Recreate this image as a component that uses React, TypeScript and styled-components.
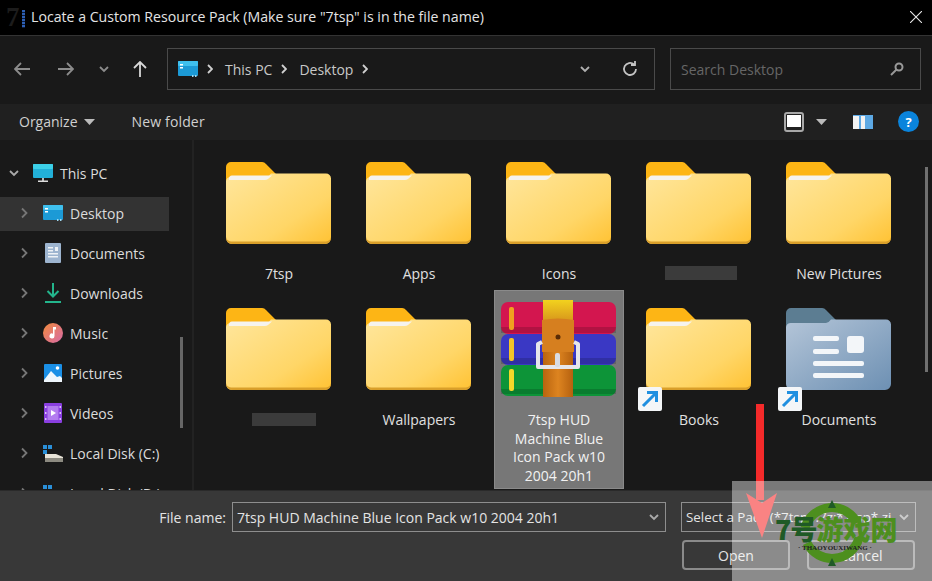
import React from "react";
import styled, { createGlobalStyle } from "styled-components";

const Global = createGlobalStyle`
  html, body { margin: 0; padding: 0; background: #191919; }
  * { box-sizing: border-box; }
`;

const Window = styled.div`
  position: relative;
  width: 932px;
  height: 581px;
  overflow: hidden;
  display: flex;
  flex-direction: column;
  background: #191919;
  color: #e6e6e6;
  font-family: "Open Sans", "Liberation Sans", sans-serif;
  font-size: 14px;
`;

const TitleBar = styled.div`
  height: 36px;
  flex: none;
  background: #000;
  border-bottom: 1px solid #333;
  display: flex;
  align-items: center;
  padding: 0 10px 2px 6px;
  gap: 5px;
`;
const AppLogo = styled.div`
  position: relative;
  width: 20px;
  height: 24px;
  flex: none;
  font-family: "Liberation Serif", serif;
  font-weight: 700;
  font-size: 27px;
  line-height: 24px;
  color: #1c1c1c;
`;
const LogoBar = styled.span`
  position: absolute;
  right: 1px;
  top: 5px;
  width: 3px;
  height: 18px;
  background: repeating-linear-gradient(#2d5fb4 0 2px, #0d1c3a 2px 3px);
`;
const TitleText = styled.div`
  flex: 1;
  font-size: 14.15px;
  color: #e4e4e4;
  white-space: nowrap;
`;

const NavBar = styled.div`
  height: 68px;
  flex: none;
  background: #191919;
  display: flex;
  align-items: flex-start;
  padding: 12px 11px 0 12px;
`;
const NavButtons = styled.div`
  width: 155px;
  flex: none;
  display: flex;
  align-items: center;
  height: 41px;
  padding-left: 2px;
`;
const NavIcon = styled.div<{ $gap?: number }>`
  width: 16px;
  margin-left: ${(p) => p.$gap ?? 0}px;
  display: flex;
  justify-content: center;
  flex: none;
`;
const AddressBox = styled.div`
  width: 488px;
  height: 42px;
  flex: none;
  border: 1px solid #4a4a4a;
  display: flex;
  align-items: center;
  padding: 0 16px 0 10px;
  color: #c8c8c8;
`;
const CrumbSep = styled.svg`
  width: 6px;
  height: 10px;
  margin: 0 12px 0 9px;
  flex: none;
`;
const Spacer = styled.div`
  flex: 1;
`;
const DropSlot = styled.div`
  display: flex;
  margin-right: 31px;
`;
const SearchBox = styled.div`
  width: 251px;
  height: 42px;
  margin-left: 15px;
  flex: none;
  border: 1px solid #4a4a4a;
  display: flex;
  align-items: center;
  justify-content: space-between;
  padding: 0 16px 0 10px;
  color: #666;
`;

const CommandBar = styled.div`
  height: 36px;
  flex: none;
  background: #202020;
  display: flex;
  align-items: center;
  padding: 0 13px 1px 19px;
  color: #d0d0d0;
`;
const CommandLabel = styled.span`
  margin-right: 6px;
`;
const CommandGroup = styled.div`
  display: flex;
  align-items: center;
`;
const NewFolder = styled.span`
  margin-left: 37px;
  letter-spacing: 0.15px;
`;
const ViewTools = styled.div`
  margin-left: auto;
  display: flex;
  align-items: center;
  gap: 12px;
`;
const PaneIcon = styled.svg`
  width: 20px;
  height: 14px;
  margin-left: 14px;
`;
const Help = styled.div`
  width: 21px;
  height: 21px;
  border-radius: 50%;
  margin-left: 25px;
  background: #0a84dc;
  color: #fff;
  font-size: 13px;
  font-weight: 700;
  display: flex;
  align-items: center;
  justify-content: center;
`;

const Body = styled.div`
  flex: 1;
  min-height: 0;
  display: flex;
  overflow: hidden;
`;
const Sidebar = styled.div`
  position: relative;
  width: 194px;
  flex: none;
  border-right: 2px solid #222;
  padding-top: 17px;
  overflow: hidden;
  display: flex;
  flex-direction: column;
  gap: 6px;
`;
const TreeRow = styled.div<{ $active?: boolean; $root?: boolean }>`
  height: 34px;
  width: 169px;
  flex: none;
  display: flex;
  align-items: center;
  padding-left: ${(p) => (p.$root ? 7 : 17)}px;
  padding-bottom: 2px;
  background: ${(p) => (p.$active ? "#333" : "transparent")};
  color: #dcdcdc;
  white-space: nowrap;
`;
const TreeChevron = styled.div`
  width: 14px;
  flex: none;
  display: flex;
  justify-content: center;
`;
const TreeIcon = styled.div`
  width: 26px;
  margin-left: 9px;
  margin-right: 4px;
  flex: none;
  display: flex;
  justify-content: center;
`;
const SideThumb = styled.div`
  position: absolute;
  left: 180px;
  top: 197px;
  width: 3px;
  height: 91px;
  background: #666;
`;

const Files = styled.div`
  position: relative;
  flex: 1;
  padding: 4px 0 0 20px;
  display: grid;
  grid-template-columns: repeat(5, 130px);
  grid-auto-rows: min-content;
  column-gap: 10px;
  row-gap: 10px;
  align-content: start;
  overflow: hidden;
`;
const FileThumb = styled.div`
  position: absolute;
  right: 4px;
  top: 27px;
  width: 3px;
  height: 205px;
  background: #707070;
`;
const Tile = styled.div<{ $selected?: boolean }>`
  position: relative;
  width: 130px;
  height: ${(p) => (p.$selected ? 199 : 136)}px;
  padding-top: 10px;
  display: flex;
  flex-direction: column;
  align-items: center;
  background: ${(p) => (p.$selected ? "#777" : "transparent")};
  box-shadow: ${(p) => (p.$selected ? "inset 0 0 0 1px #8a8a8a" : "none")};
  color: ${(p) => (p.$selected ? "#f2f2f2" : "#e0e0e0")};
`;
const IconSlot = styled.div`
  height: 97px;
  padding-right: 1px;
  flex: none;
  display: flex;
  align-items: center;
  justify-content: center;
`;
const TileLabel = styled.div`
  margin-top: 14px;
  width: 110px;
  text-align: center;
  line-height: 18.7px;
`;
const Redacted = styled.div<{ $w: number; $x: number; $top: number; $h: number }>`
  margin-top: ${(p) => p.$top}px;
  margin-left: ${(p) => p.$x}px;
  width: ${(p) => p.$w}px;
  height: ${(p) => p.$h}px;
  background: #3b3b3b;
`;
const ShortcutBadge = styled.div`
  position: absolute;
  left: 4px;
  top: 97px;
  width: 24px;
  height: 24px;
  background: #f4f6f8;
  border-radius: 2px;
  display: flex;
  align-items: center;
  justify-content: center;
`;

const Footer = styled.div`
  height: 91px;
  flex: none;
  background: #383838;
  border-top: 1px solid #2a2a2a;
  padding: 11px 0 0 0;
  display: flex;
  flex-direction: column;
  gap: 8px;
  color: #e4e4e4;
`;
const FooterRow = styled.div<{ $right: number }>`
  display: flex;
  justify-content: flex-end;
  align-items: center;
  padding-right: ${(p) => p.$right}px;
`;
const FieldLabel = styled.label`
  margin-right: 6px;
`;
const Field = styled.div<{ $w: number }>`
  width: ${(p) => p.$w}px;
  height: 30px;
  border: 1px solid #8e8e8e;
  display: flex;
  align-items: center;
  justify-content: space-between;
  padding: 0 5px 0 4px;
  white-space: nowrap;
  overflow: hidden;
`;
const FieldText = styled.span<{ $size?: number }>`
  overflow: hidden;
  font-size: ${(p) => p.$size ?? 14}px;
`;
const FilterGap = styled.div`
  width: 15px;
  flex: none;
`;
const DialogButton = styled.div<{ $gap?: number }>`
  width: 108px;
  height: 30px;
  margin-left: ${(p) => p.$gap ?? 0}px;
  border: 2px solid #8a8a8a;
  border-radius: 4px;
  display: flex;
  align-items: center;
  justify-content: center;
  color: #e4e4e4;
`;

const Wash = styled.div`
  position: absolute;
  left: 732px;
  top: 481px;
  width: 200px;
  height: 100px;
  background: rgba(255, 255, 255, 0.42);
`;
const ArrowLayer = styled.svg`
  position: absolute;
  left: 740px;
  top: 400px;
  width: 45px;
  height: 145px;
`;
const RingLayer = styled.svg`
  position: absolute;
  left: 65px;
  top: 17px;
  width: 70px;
  height: 70px;
`;
const BrandText = styled.div`
  position: absolute;
  left: 43px;
  top: 33px;
  display: flex;
  font-family: "Noto Sans CJK SC", sans-serif;
  font-weight: 900;
  font-size: 27px;
  line-height: 30px;
  white-space: nowrap;
`;
const BrandDark = styled.span`
  color: #1f5a26;
  letter-spacing: -1px;
`;
const BrandLight = styled.span`
  color: #4d8f1e;
`;
const BrandSub = styled.div`
  position: absolute;
  left: 66px;
  top: 63px;
  font-family: "Liberation Serif", serif;
  font-weight: 700;
  font-size: 7px;
  line-height: 8px;
  color: #222;
  white-space: nowrap;
`;

const Chevron = ({ dir, color = "#aaa", size = 12 }: { dir: "down" | "right"; color?: string; size?: number }) => (
  <svg width={size} height={size} viewBox="0 0 12 12" fill="none" stroke={color} strokeWidth="1.8">
    {dir === "down" ? <path d="M2 4l4 4 4-4" /> : <path d="M4 1.5l4.5 4.5L4 10.5" />}
  </svg>
);
const Caret = ({ color = "#bbb" }: { color?: string }) => (
  <svg width="11" height="6" viewBox="0 0 11 6"><path d="M0 0h11L5.5 6z" fill={color} /></svg>
);
const Sep = () => (
  <CrumbSep viewBox="0 0 6 10" fill="none" stroke="#d0d0d0" strokeWidth="1.800">
    <path d="M1 1l4 4-4 4" />
  </CrumbSep>
);

const Folder = () => (
  <svg width="105" height="82" viewBox="0 0 105 82">
    <defs>
      <linearGradient id="fbody" x1="0" y1="0" x2="1" y2="1">
        <stop offset="0" stopColor="#ffe69c" />
        <stop offset="0.65" stopColor="#ffd667" />
        <stop offset="1" stopColor="#ffc233" />
      </linearGradient>
    </defs>
    <path d="M0 14V5a5 5 0 0 1 5-5h30a6 6 0 0 1 5 2l10 10v14H0z" fill="#fdb515" />
    <path d="M0 19a5 5 0 0 1 5-4h35a8 8 0 0 0 5-3.500h55a5 5 0 0 1 5 5V76a6 6 0 0 1-6 6H6a6 6 0 0 1-6-6z" fill="url(#fbody)" />
    <path d="M3 17a3 3 0 0 1 3-3.500h40l-4 3.500a6 6 0 0 1-3 1H3z" fill="#f5f3ee" />
    <path d="M0 76a6 6 0 0 0 6 6h93a6 6 0 0 0 6-6v-1.500a5 5 0 0 1-5 5H5a5 5 0 0 1-5-5z" fill="#d99f2a" />
  </svg>
);

const DocFolder = () => (
  <svg width="105" height="82" viewBox="0 0 105 82">
    <defs>
      <linearGradient id="dbody" x1="0" y1="0" x2="1" y2="1">
        <stop offset="0" stopColor="#b4c5d8" />
        <stop offset="1" stopColor="#6d90b3" />
      </linearGradient>
    </defs>
    <path d="M0 20V5a5 5 0 0 1 5-5h30a6 6 0 0 1 5 2l10 10v10H0z" fill="#5c7d92" />
    <path d="M0 19a5 5 0 0 1 5-4h35a8 8 0 0 0 5-3.500h55a5 5 0 0 1 5 5V76a6 6 0 0 1-6 6H6a6 6 0 0 1-6-6z" fill="url(#dbody)" />
    <g fill="#f3f6f9">
      <rect x="27" y="28" width="26" height="5" rx="2" />
      <rect x="27" y="41" width="26" height="5" rx="2" />
      <rect x="61" y="28" width="17" height="17" rx="3" />
      <rect x="27" y="53" width="51" height="5" rx="2" />
      <rect x="27" y="65" width="51" height="5" rx="2" />
    </g>
  </svg>
);

const WinRar = () => (
  <svg width="116" height="97" viewBox="0 0 116 97">
    <defs>
      <linearGradient id="rbelt" x1="0" y1="0" x2="1" y2="0">
        <stop offset="0" stopColor="#b9640f" />
        <stop offset="0.5" stopColor="#dd8420" />
        <stop offset="1" stopColor="#b5610f" />
      </linearGradient>
      <linearGradient id="rtop" x1="0" y1="0" x2="0" y2="1">
        <stop offset="0" stopColor="#f2d21e" />
        <stop offset="1" stopColor="#d99a1c" />
      </linearGradient>
    </defs>
    <rect x="0" y="2" width="115" height="32" rx="7" fill="#d3164f" />
    <rect x="0" y="34" width="115" height="31" rx="7" fill="#3a38c4" />
    <rect x="0" y="65" width="115" height="31" rx="7" fill="#0d9438" />
    <rect x="0" y="27" width="115" height="6" fill="#000" opacity="0.16" />
    <rect x="0" y="58" width="115" height="6" fill="#000" opacity="0.16" />
    <rect x="0" y="89" width="115" height="5" fill="#000" opacity="0.16" />
    <rect x="8" y="7" width="5" height="23" rx="2" fill="#f0a020" />
    <rect x="8" y="38" width="5" height="23" rx="2" fill="#f2c42a" />
    <rect x="8" y="69" width="5" height="22" rx="2" fill="#f2d82a" />
    <rect x="42" y="0" width="30" height="97" fill="url(#rbelt)" />
    <rect x="42" y="0" width="30" height="20" fill="url(#rtop)" />
    <path d="M41 20q16-3 32 0v6q-16-2-32 0zM41 26q16-2 32 0v26H41z" fill="#d67f1f" />
    <circle cx="57" cy="37" r="2.500" fill="#5a2c06" />
    <path d="M41 42l-4 2v23h40V44l-4-2" fill="none" stroke="#e6e6ea" strokeWidth="4" strokeLinejoin="round" />
    <rect x="54" y="53" width="5" height="14" rx="2" fill="#d9dce2" />
  </svg>
);

const ArrowBadge = () => (
  <svg width="18" height="18" viewBox="0 0 18 18" fill="none" stroke="#1f8fe0" strokeWidth="3">
    <path d="M2 16L15 3M6 2.500h9.500V12" />
  </svg>
);

const DesktopIcon = ({ w = 20 }: { w?: number }) => (
  <svg width={w} height={w * 0.8} viewBox="0 0 20 16">
    <rect x="0" y="0" width="20" height="15" rx="1" fill="#1c9ad6" />
    <rect x="0" y="0" width="20" height="5" rx="1" fill="#3fc0ee" />
    <rect x="2" y="3" width="3" height="1.500" fill="#fff" />
    <rect x="2" y="6" width="3" height="1.500" fill="#fff" />
    <rect x="14" y="14" width="1.500" height="2" fill="#9fd8f0" />
    <rect x="17" y="14" width="1.500" height="2" fill="#9fd8f0" />
  </svg>
);
const PcIcon = () => (
  <svg width="20" height="19" viewBox="0 0 20 19">
    <rect x="0" y="0" width="20" height="14" rx="1" fill="#22b0d8" />
    <rect x="0" y="0" width="20" height="5" rx="1" fill="#3cd0e8" />
    <rect x="9" y="14" width="2" height="3" fill="#bbb" />
    <rect x="5" y="16.500" width="10" height="1.500" fill="#ddd" />
  </svg>
);
const DocsIcon = () => (
  <svg width="16" height="20" viewBox="0 0 16 20">
    <rect width="16" height="20" rx="1" fill="#9db4cf" />
    <g fill="#eef2f6">
      <rect x="3" y="4" width="5" height="1.500" />
      <rect x="3" y="7" width="5" height="1.500" />
      <rect x="10" y="4" width="3" height="4" />
      <rect x="3" y="10" width="10" height="1.500" />
      <rect x="3" y="13" width="10" height="1.500" />
    </g>
  </svg>
);
const DownloadIcon = () => (
  <svg width="16" height="20" viewBox="0 0 16 20" fill="none" stroke="#23b58c" strokeWidth="2">
    <path d="M8 0v13M2.500 8L8 13.500 13.500 8M0 19h16" />
  </svg>
);
const MusicIcon = () => (
  <svg width="20" height="20" viewBox="0 0 20 20">
    <defs>
      <linearGradient id="mus" x1="0" y1="0" x2="1" y2="1">
        <stop offset="0" stopColor="#f08a3c" />
        <stop offset="1" stopColor="#d86aa8" />
      </linearGradient>
    </defs>
    <circle cx="10" cy="10" r="10" fill="url(#mus)" />
    <path d="M10 4h3v2.500h-1.500V13a2.500 2.500 0 1 1-1.500-2.300z" fill="#fff" />
  </svg>
);
const PictureIcon = () => (
  <svg width="18" height="18" viewBox="0 0 18 18">
    <rect width="18" height="18" rx="1" fill="#1a8fe6" />
    <circle cx="13.500" cy="4" r="1.800" fill="#fff" />
    <path d="M0 16L7 7l6 6 3-1 2 2v4H0z" fill="#eef6fc" />
  </svg>
);
const VideoIcon = () => (
  <svg width="18" height="20" viewBox="0 0 18 20">
    <rect width="18" height="20" rx="1" fill="#8a3fe0" />
    <rect x="3.500" y="3" width="11" height="14" fill="#b37cf0" />
    <path d="M7 7l5 3-5 3z" fill="#fff" />
    <g fill="#d9c2f7">
      <rect x="1" y="3" width="1.500" height="2" />
      <rect x="1" y="9" width="1.500" height="2" />
      <rect x="1" y="15" width="1.500" height="2" />
      <rect x="15.500" y="3" width="1.500" height="2" />
      <rect x="15.500" y="9" width="1.500" height="2" />
      <rect x="15.500" y="15" width="1.500" height="2" />
    </g>
  </svg>
);
const DiskIcon = () => (
  <svg width="20" height="17" viewBox="0 0 20 17">
    <g fill="#2a8fd8">
      <rect x="0" y="0" width="4" height="4" />
      <rect x="5" y="0" width="4" height="4" />
      <rect x="0" y="5" width="4" height="4" />
    </g>
    <path d="M2 9h11l7 3v1H2z" fill="#e8e4d8" />
    <rect x="2" y="13" width="18" height="4" fill="#8c8a80" />
  </svg>
);

const tree: [string, React.ReactNode][] = [
  ["Desktop", <DesktopIcon />],
  ["Documents", <DocsIcon />],
  ["Downloads", <DownloadIcon />],
  ["Music", <MusicIcon />],
  ["Pictures", <PictureIcon />],
  ["Videos", <VideoIcon />],
  ["Local Disk (C:)", <DiskIcon />],
  ["Local Disk (D:)", <DiskIcon />],
];

export default function App() {
  return (
    <Window>
      <Global />
      <TitleBar>
        <AppLogo>
          7<LogoBar />
        </AppLogo>
        <TitleText>Locate a Custom Resource Pack (Make sure "7tsp" is in the file name)</TitleText>
        <svg width="12" height="12" viewBox="0 0 12 12" stroke="#e8e8e8" strokeWidth="1.100">
          <path d="M0 0l12 12M12 0L0 12" />
        </svg>
      </TitleBar>

      <NavBar>
        <NavButtons>
          <NavIcon>
            <svg width="16" height="14" viewBox="0 0 16 14" fill="none" stroke="#8c8c8c" strokeWidth="1.800">
              <path d="M16 7H1M7 1L1 7l6 6" />
            </svg>
          </NavIcon>
          <NavIcon $gap={28}>
            <svg width="16" height="14" viewBox="0 0 16 14" fill="none" stroke="#8c8c8c" strokeWidth="1.800">
              <path d="M0 7h15M9 1l6 6-6 6" />
            </svg>
          </NavIcon>
          <NavIcon $gap={22}>
            <Chevron dir="down" color="#8c8c8c" />
          </NavIcon>
          <NavIcon $gap={20}>
            <svg width="14" height="16" viewBox="0 0 14 16" fill="none" stroke="#d8d8d8" strokeWidth="1.800">
              <path d="M7 16V1M1 7l6-6 6 6" />
            </svg>
          </NavIcon>
        </NavButtons>
        <AddressBox>
          <DesktopIcon />
          <Sep />
          <span>This PC</span>
          <Sep />
          <span>Desktop</span>
          <Sep />
          <Spacer />
          <DropSlot>
            <Chevron dir="down" color="#b0b0b0" />
          </DropSlot>
          <NavIcon>
            <svg width="16" height="16" viewBox="0 0 16 16" fill="none" stroke="#c4c4c4" strokeWidth="1.800">
              <path d="M14 8a6 6 0 1 1-2-4.500M13 0v4H9" />
            </svg>
          </NavIcon>
        </AddressBox>
        <SearchBox>
          <span>Search Desktop</span>
          <svg width="14" height="14" viewBox="0 0 14 14" fill="none" stroke="#999" strokeWidth="2">
            <circle cx="9" cy="5" r="3.500" />
            <path d="M6.500 7.500L1 13" />
          </svg>
        </SearchBox>
      </NavBar>

      <CommandBar>
        <CommandGroup>
          <CommandLabel>Organize</CommandLabel>
          <Caret />
        </CommandGroup>
        <NewFolder>New folder</NewFolder>
        <ViewTools>
          <svg width="20" height="20" viewBox="0 0 20 20">
            <rect x="1" y="1" width="18" height="18" rx="2" fill="none" stroke="#a8a8a8" strokeWidth="2" />
            <rect x="3" y="3" width="14" height="12" fill="#fff" />
          </svg>
          <Caret />
          <PaneIcon viewBox="0 0 20 14">
            <rect width="20" height="14" fill="#5da9e4" />
            <rect x="0" y="1" width="6" height="13" fill="#f2f2f2" />
            <rect x="8" y="1" width="4" height="13" fill="#f2f2f2" />
          </PaneIcon>
        </ViewTools>
        <Help>?</Help>
      </CommandBar>

      <Body>
        <Sidebar>
          <TreeRow $root>
            <TreeChevron>
              <Chevron dir="down" />
            </TreeChevron>
            <TreeIcon>
              <PcIcon />
            </TreeIcon>
            This PC
          </TreeRow>
          {tree.map(([name, icon], i) => (
            <TreeRow key={name} $active={i === 0}>
              <TreeChevron>
                <Chevron dir="right" color="#777" />
              </TreeChevron>
              <TreeIcon>{icon}</TreeIcon>
              {name}
            </TreeRow>
          ))}
          <SideThumb />
        </Sidebar>

        <Files>
          {["7tsp", "Apps", "Icons"].map((n) => (
            <Tile key={n}>
              <IconSlot>
                <Folder />
              </IconSlot>
              <TileLabel>{n}</TileLabel>
            </Tile>
          ))}
          <Tile>
            <IconSlot>
              <Folder />
            </IconSlot>
            <Redacted $w={72} $h={17} $x={4} $top={15} />
          </Tile>
          <Tile>
            <IconSlot>
              <Folder />
            </IconSlot>
            <TileLabel>New Pictures</TileLabel>
          </Tile>
          <Tile>
            <IconSlot>
              <Folder />
            </IconSlot>
            <Redacted $w={64} $h={19} $x={10} $top={16} />
          </Tile>
          <Tile>
            <IconSlot>
              <Folder />
            </IconSlot>
            <TileLabel>Wallpapers</TileLabel>
          </Tile>
          <Tile $selected>
            <IconSlot>
              <WinRar />
            </IconSlot>
            <TileLabel>7tsp HUD Machine Blue Icon Pack w10 2004 20h1</TileLabel>
          </Tile>
          <Tile>
            <IconSlot>
              <Folder />
            </IconSlot>
            <ShortcutBadge>
              <ArrowBadge />
            </ShortcutBadge>
            <TileLabel>Books</TileLabel>
          </Tile>
          <Tile>
            <IconSlot>
              <DocFolder />
            </IconSlot>
            <ShortcutBadge>
              <ArrowBadge />
            </ShortcutBadge>
            <TileLabel>Documents</TileLabel>
          </Tile>
          <FileThumb />
        </Files>
      </Body>

      <Footer>
        <FooterRow $right={16}>
          <FieldLabel>File name:</FieldLabel>
          <Field $w={434}>
            <FieldText>7tsp HUD Machine Blue Icon Pack w10 2004 20h1</FieldText>
            <Chevron dir="down" color="#aaa" />
          </Field>
          <FilterGap />
          <Field $w={235}>
            <FieldText $size={13.4}>Select a Pack (*7tsp*.7z;*7tsp*.zi</FieldText>
            <Chevron dir="down" color="#aaa" />
          </Field>
        </FooterRow>
        <FooterRow $right={17}>
          <DialogButton>Open</DialogButton>
          <DialogButton $gap={17}>Cancel</DialogButton>
        </FooterRow>
      </Footer>

      <ArrowLayer viewBox="0 0 45 145">
        <rect x="16" y="4" width="8" height="96" fill="#f42a2a" />
        <path d="M6 93l16 10 15-10-15 45z" fill="#f42a2a" />
      </ArrowLayer>
      <Wash>
        <RingLayer viewBox="0 0 70 70" fill="none">
          <path d="M8 30A28 28 0 0 1 60 25" stroke="#4d8f1e" strokeWidth="9" />
          <path d="M62 40A28 28 0 0 1 10 45" stroke="#4d8f1e" strokeWidth="9" />
          <path d="M35 2l4 8h-8zM35 60l4 8h-8z" fill="#1f5a26" />
        </RingLayer>
        <BrandText>
          <BrandDark>7号</BrandDark>
          <BrandLight>游戏网</BrandLight>
        </BrandText>
        <BrandSub>· THAOYOUXIWANG ·</BrandSub>
      </Wash>
    </Window>
  );
}
